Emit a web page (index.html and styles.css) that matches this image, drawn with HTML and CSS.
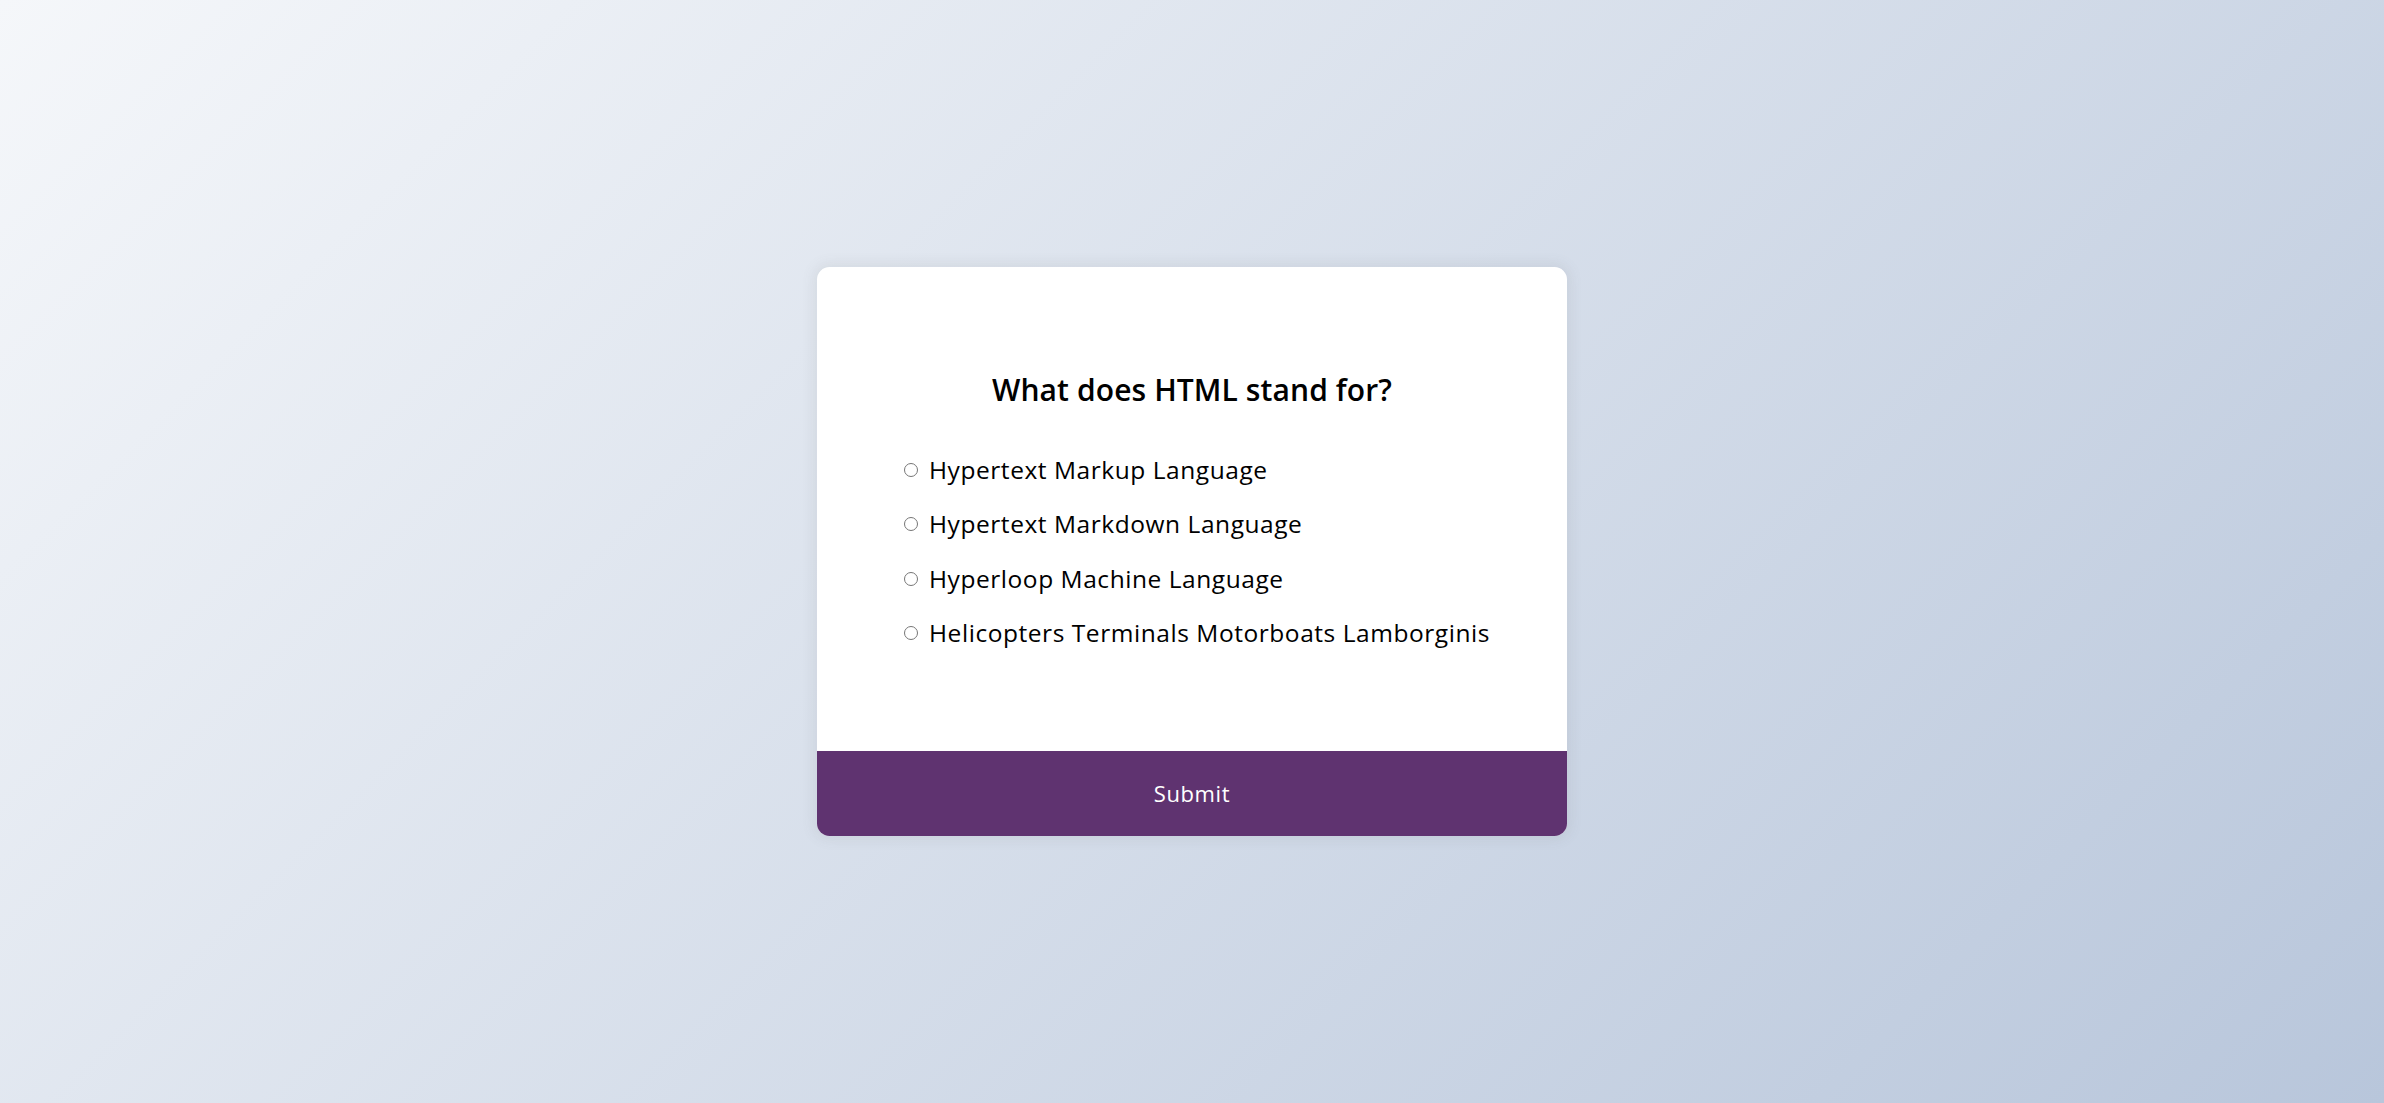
FILE: index.html
```html
<!DOCTYPE html>
<html lang="en">
<head>
<meta charset="UTF-8">
<title>Quiz App</title>
<link rel="stylesheet" href="styles.css">
</head>
<body>
<div class="quiz-container">
  <div class="quiz-header">
    <h2 class="question">What does HTML stand for?</h2>
    <ul class="answers">
      <li><input type="radio" name="answer" id="a" class="answer"> <label for="a">Hypertext Markup Language</label></li>
      <li><input type="radio" name="answer" id="b" class="answer"> <label for="b">Hypertext Markdown Language</label></li>
      <li><input type="radio" name="answer" id="c" class="answer"> <label for="c">Hyperloop Machine Language</label></li>
      <li><input type="radio" name="answer" id="d" class="answer"> <label for="d">Helicopters Terminals Motorboats Lamborginis</label></li>
    </ul>
  </div>
  <button class="submit">Submit</button>
</div>
</body>
</html>
```

FILE: styles.css
```css
* { box-sizing: border-box; }

body {
  margin: 0;
  height: 100vh;
  display: flex;
  align-items: center;
  justify-content: center;
  background-color: #b8c6db;
  background-image: linear-gradient(315deg, #b8c6db 0%, #f5f7fa 100%);
  font-family: "Open Sans", "Noto Sans", sans-serif;
  overflow: hidden;
}

.quiz-container {
  width: 750px;
  background: #fff;
  border-radius: 12.5px;
  box-shadow: 0 0 12.5px 2.5px rgba(100, 100, 100, 0.1);
  overflow: hidden;
}

.quiz-header {
  padding: 80px;
}

.question {
  margin: 0;
  padding: 20px;
  text-align: center;
  font-size: 30px;
  line-height: 45px;
  font-weight: 600;
  letter-spacing: 0.1px;
  color: #000;
}

.answers {
  list-style: none;
  padding: 0;
  margin: 20px 0;
}

.answers li {
  font-size: 24.5px;
  line-height: 36px;
  margin: 18.5px 0;
  letter-spacing: 0.55px;
  white-space: nowrap;
  color: #000;
  display: flex;
  align-items: center;
  gap: 10px;
}

.answers li:first-child { margin-top: 0; }
.answers li:last-child { margin-bottom: 0; }

.answer {
  flex: none;
  width: 14px;
  height: 14px;
  margin: 0 1px 0 7px;
}

.submit {
  display: block;
  width: 100%;
  border: none;
  background: #5f3370;
  color: #fff;
  font-family: inherit;
  font-size: 22px;
  line-height: 33px;
  letter-spacing: 0.6px;
  padding: 26px;
  cursor: pointer;
}
```
